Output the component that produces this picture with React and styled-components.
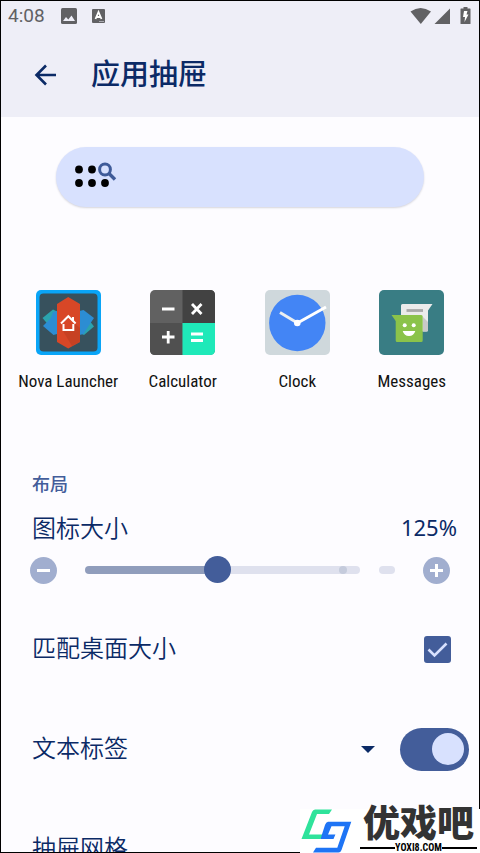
import React, { useState } from 'react'
import styled, { createGlobalStyle } from 'styled-components';

const apps = [
  { name: 'Nova Launcher', Icon: NovaIcon },
  { name: 'Calculator', Icon: CalculatorIcon },
  { name: 'Clock', Icon: ClockIcon },
  { name: 'Messages', Icon: MessagesIcon },
]

const MIN = 10
const MAX = 250

const App = () => {
  const [size, setSize] = useState(125)
  const [match, setMatch] = useState(true)
  const [labels, setLabels] = useState(true)

  return (
    <Screen>
      <GlobalStyle />
      <Header>
        <StatusBar>
          <Time>4:08</Time>
          <ImageIcon />
          <LetterIcon />
          <Signals>
            <SignalIcons />
          </Signals>
        </StatusBar>
        <TitleBar>
          <IconButton type="button" aria-label="返回">
            <svg width="22" height="22" viewBox="0 0 22 22" fill="none" stroke="#0b2a66" strokeWidth="2.6">
              <path d="M22 11H2.5M12 1.5L2.5 11l9.5 9.5" />
            </svg>
          </IconButton>
          <h1>应用抽屉</h1>
        </TitleBar>
      </Header>

      <Content>
        <SearchBar type="button" aria-label="搜索">
          <DrawerSearchIcon />
        </SearchBar>

        <AppGrid>
          {apps.map(({ name, Icon }) => (
            <AppItem key={name}>
              <Icon />
              <span>{name}</span>
            </AppItem>
          ))}
        </AppGrid>

        <SectionTitle>布局</SectionTitle>
        <SizeHead>
          <label htmlFor="icon-size">图标大小</label>
          <output htmlFor="icon-size">{size}%</output>
        </SizeHead>
        <SizeRow>
          <RoundButton type="button" aria-label="减小" onClick={() => setSize(Math.max(MIN, size - 5))}>
            <svg width="27" height="27" stroke="#fff" strokeWidth="3"><path d="M7 13.5h13" /></svg>
          </RoundButton>
          <Track>
            <Slider
              id="icon-size"
              type="range"
              min={MIN}
              max={MAX}
              value={size}
              onChange={(e) => setSize(Number(e.target.value))}
            />
            <TrackMark />
          </Track>
          <TrackEnd />
          <RoundButton type="button" aria-label="增大" onClick={() => setSize(Math.min(MAX, size + 5))}>
            <svg width="27" height="27" stroke="#fff" strokeWidth="3"><path d="M7 13.5h13M13.5 7v13" /></svg>
          </RoundButton>
        </SizeRow>

        <Row $end={28}>
          <label htmlFor="match">匹配桌面大小</label>
          <CheckBox id="match" type="checkbox" checked={match} onChange={() => setMatch(!match)} />
          <CheckMark viewBox="0 0 27 27"><path d="M4.5 13.5l6 6L22.5 7.5" /></CheckMark>
        </Row>
        <Row $end={10}>
          <label htmlFor="labels">文本标签</label>
          <IconButton type="button" aria-label="文本标签选项" aria-haspopup="true">
            <svg width="14" height="7"><path d="M0 0h14L7 7z" fill="#0b2a66" /></svg>
          </IconButton>
          <Toggle id="labels" type="checkbox" role="switch" checked={labels} onChange={() => setLabels(!labels)} />
        </Row>
        <Row $end={28}>
          <span>抽屉网格</span>
        </Row>
      </Content>

      <Watermark>
        <LogoMark />
        <Brand>
          <strong>优戏吧</strong>
          <small>YOXI8.COM</small>
        </Brand>
      </Watermark>
    </Screen>
  )
}

export default App

function ImageIcon() {
  return (
    <svg width="16" height="16" viewBox="0 0 16 16">
      <rect width="16" height="16" rx="1.5" fill="#616164" />
      <path d="M2 13l3-4 2.3 2.4L10.5 7.5 14 13z" fill="#eeeef7" />
    </svg>
  )
}

function LetterIcon() {
  return (
    <svg width="13" height="14" viewBox="0 0 13 14">
      <rect width="13" height="14" rx="1" fill="#616164" />
      <path d="M3.5 10L6.5 3l3 7M4.5 8h4" fill="none" stroke="#fff" strokeWidth="1.8" />
      <path d="M7 12.5h5" stroke="#aaaab0" />
    </svg>
  )
}

function SignalIcons() {
  return (
    <svg width="62" height="20" viewBox="0 0 62 20" fill="#616164">
      <path d="M0.5 5.5Q10.5-1.5 21 5.5L10.8 18z" />
      <path d="M24.5 18L40 2.5V18z" />
      <path d="M51 2.5h2.5V1h4v1.5H60q.5 0 .5.5v14.5q0 .5-.5.5h-9q-.5 0-.5-.5V3q0-.5.5-.5z" />
      <path d="M54 5h3.5l-1 3.5h2L54.5 16l.5-5h-2z" fill="#fff" />
    </svg>
  )
}

function DrawerSearchIcon() {
  return (
    <svg width="42" height="26" viewBox="0 0 42 26">
      {[[4, 7.5], [17, 7.5], [4, 21], [17, 21], [30, 21]].map(([x, y]) => (
        <circle key={`${x}-${y}`} cx={x} cy={y} r="3.9" />
      ))}
      <g fill="none" stroke="#3f5b99" strokeWidth="3">
        <circle cx="30" cy="7.5" r="5.4" />
        <path d="M34 11.5l6 6" strokeWidth="3.4" />
      </g>
    </svg>
  )
}

function NovaIcon() {
  return (
    <svg width="65" height="65" viewBox="0 0 65 65">
      <rect width="65" height="65" rx="5" fill="#0aa5f7" />
      <rect x="3.5" y="3.5" width="58" height="58" rx="4" fill="#37515d" />
      <path d="M6.5 28L17 19.5l4 2v22l-9-9z" fill="#2ba3ae" />
      <path d="M58 36.5L48 45l-4-2V22l9 8z" fill="#2ba3ae" />
      <path d="M17 22l4-1v23l-3.5 1L7 36l8-8z" fill="#2c8dd3" />
      <path d="M43.5 21l4-1L58 28l-5.5 8-5 8-4 1z" fill="#2c8dd3" />
      <path d="M32.2 7L44 14v38l-11.8 6.5L21 52V14z" fill="#d84727" />
      <path d="M38 33l6 5v14l-8 4-9-15h11z" fill="#bc3d22" opacity=".6" />
      <path d="M25 33.5l7.3-7.3 7.3 7.3M37 30.5V27M27.5 34v6h9.8v-6" fill="none" stroke="#fff" strokeWidth="2" />
    </svg>
  )
}

function CalculatorIcon() {
  return (
    <svg width="65" height="65" viewBox="0 0 65 65">
      <rect width="65" height="65" rx="5" fill="#616161" />
      <path d="M32.5 0H60q5 0 5 5v28H32.5z" fill="#424242" />
      <path d="M0 33h32.5v32H5q-5 0-5-5z" fill="#505050" />
      <path d="M32.5 33H65v27q0 5-5 5H32.5z" fill="#1fe9b9" />
      <path d="M12 19h12.5M42 14l9.5 10M51.5 14L42 24M12 47h12.5M18.2 41v12.5M41 44h12M41 50.5h12" stroke="#fff" strokeWidth="2.8" />
    </svg>
  )
}

function ClockIcon() {
  return (
    <svg width="65" height="65" viewBox="0 0 65 65">
      <rect width="65" height="65" rx="5" fill="#cfd8dc" />
      <circle cx="32.3" cy="33" r="28.2" fill="#4385f5" />
      <path d="M15 22.5L32.5 33" stroke="#eceff1" strokeWidth="3" />
      <path d="M32.5 33L61 17" stroke="#fff" strokeWidth="3" />
      <circle cx="32.3" cy="33" r="3.3" fill="#fff" />
    </svg>
  )
}

function MessagesIcon() {
  return (
    <svg width="65" height="65" viewBox="0 0 65 65">
      <rect width="65" height="65" rx="5" fill="#397d84" />
      <path d="M23.5 14h30L49 20.5V40q0 1.5-1.5 1.5h-24Q22 41.5 22 40V15.5q0-1.5 1.5-1.5z" fill="#ebebeb" />
      <path d="M44 27l5 5v8q0 1.5-1.5 1.5H44z" fill="#c9c9c9" />
      <path d="M27.5 20.5H44" stroke="#a8a8a8" strokeWidth="2.8" />
      <path d="M12.5 25h29.7q1.5 0 1.5 1.5v24q0 1.5-1.5 1.5h-24q-1.5 0-1.5-1.5V31z" fill="#8bc34a" />
      <g fill="#fff">
        <circle cx="25.7" cy="35.3" r="2" />
        <circle cx="34.7" cy="35.3" r="2" />
        <path d="M23.7 41h12.6q-1.5 5-6.3 5t-6.3-5z" />
      </g>
    </svg>
  )
}

function LogoMark() {
  return (
    <svg width="52" height="44" viewBox="0 0 52 44">
      <path d="M15 .5h17L29 5H17L9 25.5h14L20.5 30H1.5L12 3Q13 .5 15 .5z" fill="#2fe39b" />
      <path d="M28 12.7h23.3L41.5 41q-1 2.5-3 2.5H13l3-4.8h21.3l7.4-21.4H31.5L28 25.5h7.4L33.5 30H20.5L25 16q1-3 3-3.3z" fill="#1e74f5" />
    </svg>
  )
}

const GlobalStyle = createGlobalStyle`
body{
  margin:0;
  background-color:#fdfcff;
}
*{
  box-sizing:border-box;
}
`;

const Screen = styled.div`
position:relative;
height:100vh;
display:flex;
flex-direction:column;
border:1px solid black;
background-color:#fdfcff;
color:#0b2a66;
font-family:Roboto,"Noto Sans CJK SC",sans-serif;
font-size:24px;
font-weight:350;
line-height:32px;
`;

const Header = styled.header`
background-color:#eeeef7;
`;

const StatusBar = styled.div`
display:flex;
align-items:center;
gap:15px;
height:30px;
padding:0 7px;
`;

const Time = styled.span`
color:#616164;
font-size:19px;
font-weight:400;
margin-right:1px;
`;

const Signals = styled.div`
display:flex;
margin-left:auto;
`;

const TitleBar = styled.div`
display:flex;
align-items:center;
gap:24px;
height:86px;
padding:2px 22px 0;
h1{
  margin:0;
  font-size:29px;
  font-weight:500;
}
`;

const IconButton = styled.button`
display:flex;
align-items:center;
justify-content:center;
width:44px;
height:44px;
padding:0;
border:0;
background:none;
cursor:pointer;
`;

const Content = styled.main`
flex:1;
min-height:0;
overflow-y:auto;
scrollbar-width:none;
padding-top:30px;
`;

const SearchBar = styled.button`
display:flex;
align-items:center;
width:calc(100% - 110px);
height:60px;
margin:0 55px;
padding:0 19px 4px;
border:0;
border-radius:30px;
background-color:#d8e1fe;
box-shadow:0 1px 2px #d5d5dc;
cursor:pointer;
`;

const AppGrid = styled.div`
display:grid;
grid-template-columns:repeat(4,1fr);
padding:83px 10px 0;
`;

const AppItem = styled.div`
display:flex;
flex-direction:column;
align-items:center;
gap:10px;
color:#111;
font-family:"Roboto Condensed","Liberation Sans Narrow",Roboto,sans-serif;
font-size:17px;
font-weight:400;
white-space:nowrap;
`;

const SectionTitle = styled.h2`
margin:72px 0 12px;
padding:0 31px;
color:#435d9a;
font-size:18px;
font-weight:500;
line-height:32px;
`;

const SizeHead = styled.div`
display:flex;
justify-content:space-between;
padding:0 22px 0 31px;
output{
  font-family:"Noto Sans",sans-serif;
  font-size:22px;
  font-weight:400;
  line-height:28px;
}
`;

const SizeRow = styled.div`
display:flex;
align-items:center;
height:50px;
margin-bottom:4px;
padding:0 29px;
`;

const RoundButton = styled.button`
width:27px;
height:27px;
padding:0;
border:0;
border-radius:50%;
background-color:#a1aecf;
line-height:0;
cursor:pointer;
`;

const Track = styled.div`
position:relative;
display:flex;
flex:1;
margin:0 19px 0 28px;
`;

const Slider = styled.input`
appearance:none;
width:100%;
height:27px;
margin:0;
background:none;
cursor:pointer;

&::-webkit-slider-runnable-track{
  height:8px;
  border-radius:4px;
  background:linear-gradient(to right,#909dbc ${(p) => ((p.value - MIN) / (MAX - MIN)) * 100}%,#dfe1ee 0);
}
&::-webkit-slider-thumb{
  appearance:none;
  width:27px;
  height:27px;
  margin-top:-10px;
  border-radius:50%;
  background-color:#435d9a;
}
`;

const TrackMark = styled.span`
position:absolute;
right:13px;
top:9px;
width:8px;
height:8px;
border-radius:50%;
background-color:#c5cbdc;
pointer-events:none;
`;

const TrackEnd = styled.span`
width:16px;
height:8px;
margin-right:28px;
border-radius:4px;
background-color:#dfe1ee;
`;

const Row = styled.div`
display:flex;
align-items:center;
height:100px;
padding:0 ${(p) => p.$end}px 0 31px;
label{
  flex:1;
}
button{
  margin-right:10px;
}
`;

const CheckBox = styled.input`
appearance:none;
width:27px;
height:27px;
margin:0;
border:2px solid #435d9a;
border-radius:3px;
cursor:pointer;
&:checked{
  background-color:#435d9a;
}
&:not(:checked) + svg{
  display:none;
}
`;

const CheckMark = styled.svg`
width:27px;
height:27px;
margin-left:-27px;
fill:none;
stroke:#d8e1fe;
stroke-width:2.6;
pointer-events:none;
`;

const Toggle = styled.input`
appearance:none;
display:flex;
align-items:center;
width:69px;
height:43px;
margin:0;
padding:0 5px;
border-radius:22px;
background-color:#a1aecf;
cursor:pointer;
&::before{
  content:"";
  width:32px;
  height:32px;
  border-radius:50%;
  background-color:#d8e1fe;
}
&:checked{
  justify-content:flex-end;
  background-color:#435d9a;
}
`;

const Watermark = styled.footer`
position:absolute;
right:-1px;
bottom:-1px;
display:flex;
gap:8px;
padding-right:3px;
background-color:white;
`;

const Brand = styled.div`
display:flex;
flex-direction:column;
justify-content:space-between;
min-width:117px;
color:#333;
text-align:center;
strong{
  font-size:37px;
  font-weight:900;
  line-height:32px;
}
small{
  display:flex;
  align-items:center;
  color:black;
  font-family:"Roboto Condensed",Roboto,sans-serif;
  font-size:10px;
  font-weight:bold;
  line-height:10px;
}
small::before,
small::after{
  content:"";
  flex:1;
  height:2px;
  background-color:black;
}
`;
